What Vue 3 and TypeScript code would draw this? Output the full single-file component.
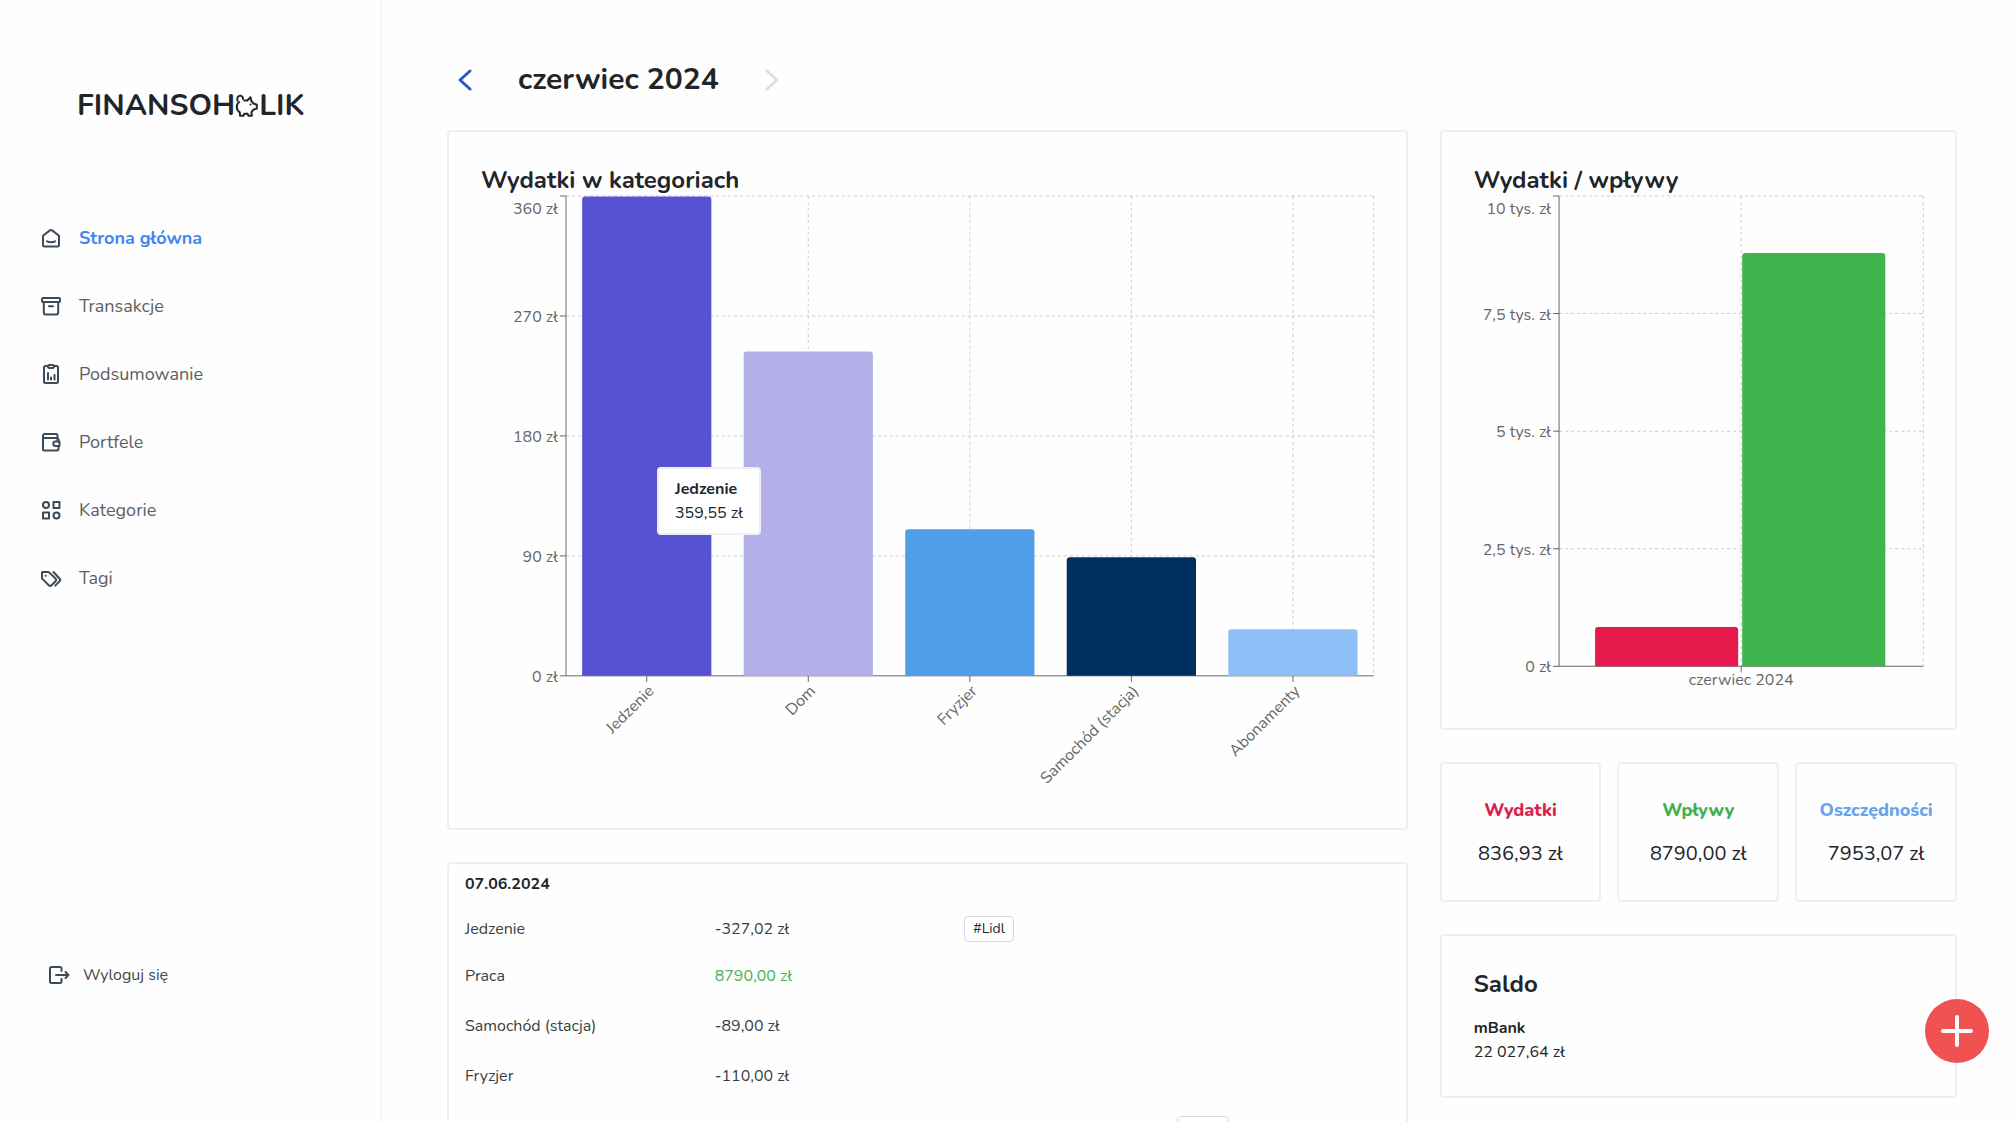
<script setup lang="ts">
interface NavItem {
  label: string
  icon: string
  active?: boolean
}

interface Bar {
  label: string
  value: number
  color: string
}

interface Transaction {
  category: string
  amount: string
  income?: boolean
  tag?: string
  size: 'compact' | 'regular' | 'tall'
}

const navItems: NavItem[] = [
  { label: 'Strona główna', icon: 'home', active: true },
  { label: 'Transakcje', icon: 'archive' },
  { label: 'Podsumowanie', icon: 'report' },
  { label: 'Portfele', icon: 'wallet' },
  { label: 'Kategorie', icon: 'grid' },
  { label: 'Tagi', icon: 'tags' },
]

const categoryPlot = { left: 85, width: 808, height: 480, max: 360 }
const categoryTicks = [360, 270, 180, 90, 0]
const categoryBars: Bar[] = [
  { label: 'Jedzenie', value: 359.55, color: '#5752d1' },
  { label: 'Dom', value: 243.4, color: '#b3afe8' },
  { label: 'Fryzjer', value: 110, color: '#509dea' },
  { label: 'Samochód (stacja)', value: 89, color: '#003060' },
  { label: 'Abonamenty', value: 35, color: '#8ebff7' },
]
const band = categoryPlot.width / categoryBars.length
const barWidth = band * 0.8

const bandCenter = (index: number): number => categoryPlot.left + band * (index + 0.5)
const categoryY = (value: number): number =>
  categoryPlot.height * (1 - value / categoryPlot.max)

const flowPlot = { left: 85, width: 364, height: 470, max: 10000 }
const flowTicks = [
  { value: 10000, label: '10 tys. zł' },
  { value: 7500, label: '7,5 tys. zł' },
  { value: 5000, label: '5 tys. zł' },
  { value: 2500, label: '2,5 tys. zł' },
  { value: 0, label: '0 zł' },
]
const flowBars: Bar[] = [
  { label: 'Wydatki', value: 836.93, color: '#e6194b' },
  { label: 'Wpływy', value: 8790, color: '#3fb54d' },
]
const flowY = (value: number): number => flowPlot.height * (1 - value / flowPlot.max)
const flowX = (index: number): number => flowPlot.left + 36 + index * 147

/* Column with rounded upper corners. */
const columnPath = (x: number, y: number, width: number, bottom: number): string =>
  `M${x} ${bottom}V${y + 3}q0-3 3-3h${width - 6}q3 0 3 3V${bottom}Z`

const stats = [
  { label: 'Wydatki', value: '836,93 zł', tone: 'red' },
  { label: 'Wpływy', value: '8790,00 zł', tone: 'green' },
  { label: 'Oszczędności', value: '7953,07 zł', tone: 'blue' },
]

const transactions: Transaction[] = [
  { category: 'Jedzenie', amount: '-327,02 zł', tag: '#Lidl', size: 'compact' },
  { category: 'Praca', amount: '8790,00 zł', income: true, size: 'regular' },
  { category: 'Samochód (stacja)', amount: '-89,00 zł', size: 'regular' },
  { category: 'Fryzjer', amount: '-110,00 zł', size: 'regular' },
]
</script>

<template>
  <div class="app">
    <aside class="sidebar">
      <a class="logo" href="#" aria-label="Finansoholik">
        <span>FINANSOH</span>
        <svg class="pig" viewBox="0 0 24 24" aria-hidden="true">
          <path
            d="M8.500 6.500h3.800l3.200-3.300.9 4 2.100 2.300 3.300 1.300v3.700l-3.600 1.300-1.700 2.400.3 3.600h-3.300l-.8-2H9.300l-.9 2H5l-.2-3.400c-2-1.300-3-3.200-3-5.400 0-2.400 1-4.300 2.900-5.500"
          />
          <path d="M2.800 7.500C1.400 4.600 2.600 2 5 1.800c2.300-.2 3.700 1.900 2.700 4" />
          <path class="dot" d="M15.500 10.500v.1" />
        </svg>
        <span>LIK</span>
      </a>

      <nav class="nav">
        <a
          v-for="item in navItems"
          :key="item.label"
          class="nav-link"
          :class="{ active: item.active }"
          href="#"
        >
          <svg class="icon" viewBox="0 0 24 24" aria-hidden="true">
            <g v-if="item.icon === 'home'">
              <path d="M4 9.800 10.800 4.400a2 2 0 0 1 2.400 0L20 9.800V19a1.500 1.500 0 0 1-1.500 1.500h-13A1.500 1.500 0 0 1 4 19Z" />
              <path d="M8 15.200c1.500 1.300 6.500 1.300 8 0" />
            </g>
            <g v-else-if="item.icon === 'archive'">
              <rect x="3" y="4" width="18" height="4" rx="1" />
              <path d="M4.800 8v10.500a2 2 0 0 0 2 2h10.400a2 2 0 0 0 2-2V8M10 12.200h4" />
            </g>
            <g v-else-if="item.icon === 'report'">
              <path d="M9 4H6.500A1.500 1.500 0 0 0 5 5.500v14A1.500 1.500 0 0 0 6.500 21h11a1.500 1.500 0 0 0 1.500-1.500v-14A1.500 1.500 0 0 0 17.500 4H15" />
              <rect x="9" y="3" width="6" height="3" rx="1.500" />
              <path d="M9 11v6.500M12 15.500v2M15.500 13v4.500" />
            </g>
            <g v-else-if="item.icon === 'wallet'">
              <path d="M18.500 11V5.500A1.500 1.500 0 0 0 17 4H5.500A1.500 1.500 0 0 0 4 5.500V19a1.500 1.500 0 0 0 1.500 1.500H18a1.500 1.500 0 0 0 1.500-1.500v-3M4 8h13.500a2 2 0 0 1 2 2v1.500" />
              <path d="M20.500 11.500h-4a2.200 2.200 0 0 0 0 4.400h4Z" />
            </g>
            <g v-else-if="item.icon === 'grid'">
              <circle cx="7" cy="7" r="3" />
              <rect x="14.500" y="4" width="6" height="6" />
              <rect x="4" y="14.500" width="6" height="6" />
              <circle cx="17.500" cy="17.500" r="3" />
            </g>
            <g v-else>
              <path d="M3 6.500v5.200a2 2 0 0 0 .6 1.400l6.200 6.100a2 2 0 0 0 2.800 0l3.900-3.900a2 2 0 0 0 0-2.800L10.400 6.600A2 2 0 0 0 9 6H3.500a.5.500 0 0 0-.5.500Z" />
              <path d="m14.500 6 6 6.500a2 2 0 0 1 0 2.800L16.300 19.600M6.700 9.700h.1" />
            </g>
          </svg>
          <span>{{ item.label }}</span>
        </a>
      </nav>

      <button class="logout" type="button">
        <svg class="icon" viewBox="0 0 24 24" aria-hidden="true">
          <path d="M14.500 8V5.500A1.500 1.500 0 0 0 13 4H4.500A1.500 1.500 0 0 0 3 5.500v13A1.500 1.500 0 0 0 4.500 20H13a1.500 1.500 0 0 0 1.500-1.500V16M9 12h12M18.500 9l3 3-3 3" />
        </svg>
        <span>Wyloguj się</span>
      </button>
    </aside>

    <main class="main">
      <header class="month">
        <button class="month-step" type="button" aria-label="Poprzedni miesiąc">
          <svg viewBox="0 0 24 24"><path d="M17 3 7 12l10 9" /></svg>
        </button>
        <h1>czerwiec 2024</h1>
        <button class="month-step" type="button" aria-label="Następny miesiąc" disabled>
          <svg viewBox="0 0 24 24"><path d="m7 3 10 9-10 9" /></svg>
        </button>
      </header>

      <div class="columns">
        <div class="column">
          <section class="card chart-card">
            <h2>Wydatki w kategoriach</h2>
            <svg class="chart" viewBox="0 0 893 600" role="img" aria-label="Wydatki w kategoriach">
              <g class="grid-lines">
                <line
                  v-for="tick in categoryTicks.slice(0, 4)"
                  :key="tick"
                  :x1="categoryPlot.left"
                  :x2="categoryPlot.left + categoryPlot.width"
                  :y1="categoryY(tick)"
                  :y2="categoryY(tick)"
                />
                <line
                  v-for="(bar, i) in categoryBars"
                  :key="bar.label"
                  :x1="bandCenter(i)"
                  :x2="bandCenter(i)"
                  y1="0"
                  :y2="categoryPlot.height"
                />
                <line x1="893" x2="893" y1="0" :y2="categoryPlot.height" />
              </g>
              <g class="axis">
                <path :d="`M${categoryPlot.left} 0V480H893`" />
                <line v-for="tick in categoryTicks" :key="tick" x1="79" x2="85" :y1="categoryY(tick)" :y2="categoryY(tick)" />
                <line v-for="(bar, i) in categoryBars" :key="bar.label" :x1="bandCenter(i)" :x2="bandCenter(i)" y1="480" y2="486" />
              </g>
              <g class="tick-labels">
                <text
                  v-for="tick in categoryTicks"
                  :key="tick"
                  x="77"
                  :y="Math.max(categoryY(tick) + 6, 18)"
                  text-anchor="end"
                >{{ tick }} zł</text>
                <text
                  v-for="(bar, i) in categoryBars"
                  :key="bar.label"
                  text-anchor="end"
                  :transform="`translate(${bandCenter(i) + 8} 496) rotate(-45)`"
                >{{ bar.label }}</text>
              </g>
              <path
                v-for="(bar, i) in categoryBars"
                :key="bar.label"
                :d="columnPath(bandCenter(i) - barWidth / 2, categoryY(bar.value), barWidth, categoryPlot.height)"
                :fill="bar.color"
              />
            </svg>
            <div class="tooltip" role="tooltip">
              <strong>Jedzenie</strong>
              <span>359,55 zł</span>
            </div>
          </section>

          <section class="card history">
            <table>
              <colgroup>
                <col class="col-wide" />
                <col class="col-wide" />
                <col class="col-narrow" />
                <col class="col-narrow" />
              </colgroup>
              <thead>
                <tr>
                  <th colspan="4" scope="colgroup">07.06.2024</th>
                </tr>
              </thead>
              <tbody>
                <tr v-for="row in transactions" :key="row.category" :class="row.size">
                  <td>{{ row.category }}</td>
                  <td :class="{ income: row.income }">{{ row.amount }}</td>
                  <td><span v-if="row.tag" class="tag">{{ row.tag }}</span></td>
                  <td></td>
                </tr>
                <tr class="tall">
                  <td></td>
                  <td></td>
                  <td></td>
                  <td><span class="tag tag-empty"></span></td>
                </tr>
              </tbody>
            </table>
          </section>
        </div>

        <div class="column">
          <section class="card chart-card">
            <h2>Wydatki / wpływy</h2>
            <svg class="chart" viewBox="0 0 449 500" role="img" aria-label="Wydatki i wpływy">
              <g class="grid-lines">
                <line
                  v-for="tick in flowTicks.slice(0, 4)"
                  :key="tick.value"
                  :x1="flowPlot.left"
                  :x2="flowPlot.left + flowPlot.width"
                  :y1="flowY(tick.value)"
                  :y2="flowY(tick.value)"
                />
                <line x1="267" x2="267" y1="0" :y2="flowPlot.height" />
                <line x1="449" x2="449" y1="0" :y2="flowPlot.height" />
              </g>
              <g class="axis">
                <path :d="`M${flowPlot.left} 0V470H449`" />
                <line v-for="tick in flowTicks" :key="tick.value" x1="79" x2="85" :y1="flowY(tick.value)" :y2="flowY(tick.value)" />
                <line x1="267" x2="267" y1="470" y2="476" />
              </g>
              <g class="tick-labels">
                <text
                  v-for="tick in flowTicks"
                  :key="tick.value"
                  x="77"
                  :y="Math.max(flowY(tick.value) + 6, 18)"
                  text-anchor="end"
                >{{ tick.label }}</text>
                <text x="267" y="489" text-anchor="middle">czerwiec 2024</text>
              </g>
              <path
                v-for="(bar, i) in flowBars"
                :key="bar.label"
                :d="columnPath(flowX(i), flowY(bar.value), 143, flowPlot.height)"
                :fill="bar.color"
              />
            </svg>
          </section>

          <div class="stats">
            <section v-for="stat in stats" :key="stat.label" class="card stat">
              <h3 :class="stat.tone">{{ stat.label }}</h3>
              <p>{{ stat.value }}</p>
            </section>
          </div>

          <section class="card balance">
            <h2>Saldo</h2>
            <strong>mBank</strong>
            <span>22 027,64 zł</span>
          </section>
        </div>
      </div>
    </main>

    <button class="add" type="button" aria-label="Dodaj transakcję">
      <svg viewBox="0 0 32 32"><path d="M16 2v28M2 16h28" /></svg>
    </button>
  </div>
</template>

<style>
body {
  margin: 0;
  background: #fefefe;
}
</style>

<style scoped>
.app {
  display: flex;
  height: 100vh;
  overflow: hidden;
  background: #fefefe;
  color: #212529;
  font-family: Nunito, Lato, sans-serif;
  font-size: 16px;
  line-height: 24px;
}

.app *,
.app *::before {
  box-sizing: border-box;
}

h1,
h2,
h3,
p {
  margin: 0;
}

a {
  color: inherit;
  text-decoration: none;
}

button {
  padding: 0;
  border: 0;
  background: none;
  color: inherit;
  font: inherit;
  cursor: pointer;
}

svg {
  display: block;
}

.sidebar {
  display: flex;
  flex: 0 0 382px;
  flex-direction: column;
  padding: 86px 0 135px;
  border-right: 2px solid #f5f6f7;
}

.logo {
  display: flex;
  align-items: center;
  margin-left: 77px;
  font-size: 30px;
  font-weight: 700;
  line-height: 40px;
}

.pig {
  width: 24px;
  height: 24px;
  fill: none;
  stroke: #212529;
  stroke-linejoin: round;
  stroke-width: 2;
}

.pig .dot {
  stroke-linecap: round;
}

.nav {
  display: flex;
  flex-direction: column;
  gap: 44px;
  margin: 100px 0 auto 39px;
}

.nav-link {
  display: flex;
  align-items: center;
  gap: 16px;
  color: #5c6064;
  font-size: 18px;
}

.nav-link.active {
  color: #4285f0;
  font-weight: 700;
}

.icon {
  width: 24px;
  height: 24px;
  fill: none;
  stroke: #3c4b5a;
  stroke-linecap: round;
  stroke-linejoin: round;
  stroke-width: 2;
}

.logout {
  display: flex;
  align-items: center;
  align-self: flex-start;
  gap: 12px;
  margin-left: 47px;
  color: #44484c;
}

.main {
  flex: 1;
  min-width: 0;
  padding: 56px 58px 32px 65px;
}

.month {
  display: flex;
  align-items: center;
  gap: 35px;
  height: 48px;
  margin-bottom: 26px;
}

h1 {
  font-size: 30px;
  font-weight: 700;
  line-height: 48px;
}

.month-step {
  display: grid;
  width: 36px;
  height: 36px;
  place-items: center;
}

.month-step svg {
  width: 24px;
  height: 24px;
  fill: none;
  stroke: #2456c8;
  stroke-linecap: round;
  stroke-linejoin: round;
  stroke-width: 3;
}

.month-step:disabled svg {
  stroke: #dcdfe1;
}

.columns {
  display: grid;
  grid-template-columns: 65fr 35fr;
  align-items: start;
  gap: 32px;
}

.column {
  display: flex;
  min-width: 0;
  flex-direction: column;
  gap: 32px;
}

.card {
  border: 2px solid #edeff0;
  border-radius: 4px;
  padding: 32px;
}

h2 {
  font-size: 24px;
  font-weight: 700;
  line-height: 32px;
}

.chart-card {
  position: relative;
}

.chart {
  width: 100%;
  height: auto;
  overflow: visible;
}

.grid-lines line {
  stroke: #ccc;
  stroke-dasharray: 3 3;
}

.axis path,
.axis line {
  fill: none;
  stroke: #666;
}

.tick-labels {
  fill: #666;
  font-size: 16px;
}

.tooltip {
  position: absolute;
  top: 335px;
  left: 208px;
  display: flex;
  flex-direction: column;
  padding: 8px 16px;
  border: 2px solid #edeff4;
  border-radius: 4px;
  background: #fff;
}

strong {
  font-weight: 700;
}

.history {
  padding: 0 16px;
}

table {
  width: 100%;
  border-collapse: collapse;
  table-layout: fixed;
}

.col-wide {
  width: 27%;
}

.col-narrow {
  width: 23%;
}

th {
  padding: 8px 0 11px;
  font-weight: 700;
  text-align: left;
}

td {
  padding: 0;
  color: #3a3e42;
}

td.income {
  color: #4caf5a;
}

.compact {
  height: 44px;
}

.regular {
  height: 50px;
}

.tall {
  height: 56px;
}

.tag {
  display: block;
  width: fit-content;
  height: 26px;
  padding: 0 8px;
  border: 1px solid #d8dbdd;
  border-radius: 4px;
  color: #212529;
  font-size: 14px;
}

.tag-empty {
  width: 52px;
}

.stats {
  display: grid;
  grid-template-columns: repeat(3, 1fr);
  gap: 16px;
}

.stat {
  padding: 32px 0;
  text-align: center;
}

h3 {
  margin-bottom: 16px;
  font-size: 18px;
  font-weight: 800;
  line-height: 28px;
}

.stat p {
  font-size: 20px;
  line-height: 28px;
}

.red {
  color: #dc1f4c;
}

.green {
  color: #43b04f;
}

.blue {
  color: #68a4ec;
}

.balance {
  display: flex;
  flex-direction: column;
}

.balance h2 {
  margin-bottom: 16px;
}

.add {
  position: fixed;
  right: 26px;
  bottom: 59px;
  display: grid;
  width: 64px;
  height: 64px;
  border-radius: 50%;
  background: #f05252;
  place-items: center;
}

.add svg {
  width: 32px;
  height: 32px;
  stroke: #fff;
  stroke-linecap: round;
  stroke-width: 4;
}
</style>
